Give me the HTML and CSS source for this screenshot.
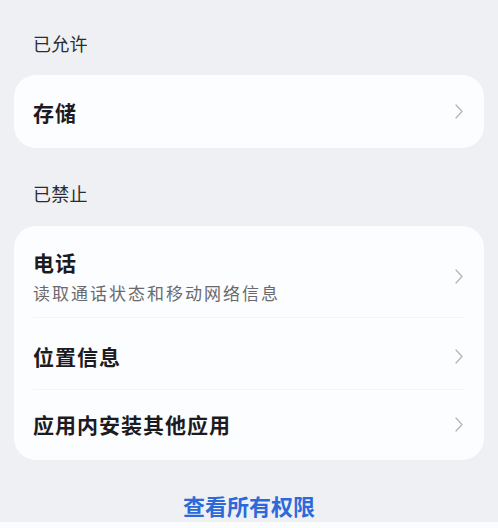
FILE: index.html
```html
<!DOCTYPE html>
<html lang="zh-CN">
<head>
<meta charset="utf-8">
<link rel="stylesheet" href="styles.css">
</head>
<body>
<div class="page">
  <div class="section-title first">已允许</div>
  <div class="card">
    <div class="row row-single">
      <div class="row-text"><div class="row-title">存储</div></div>
      <svg class="chev" viewBox="0 0 8 15" width="8" height="15"><path d="M1 1 L7 7.5 L1 14" fill="none" stroke="#b4b6b9" stroke-width="1.3" stroke-linecap="round" stroke-linejoin="round"/></svg>
    </div>
  </div>
  <div class="section-title second">已禁止</div>
  <div class="card">
    <div class="row row-phone divider">
      <div class="row-text">
        <div class="row-title">电话</div>
        <div class="row-sub">读取通话状态和移动网络信息</div>
      </div>
      <svg class="chev" viewBox="0 0 8 15" width="8" height="15"><path d="M1 1 L7 7.5 L1 14" fill="none" stroke="#b4b6b9" stroke-width="1.3" stroke-linecap="round" stroke-linejoin="round"/></svg>
    </div>
    <div class="row row-loc divider">
      <div class="row-text"><div class="row-title">位置信息</div></div>
      <svg class="chev" viewBox="0 0 8 15" width="8" height="15"><path d="M1 1 L7 7.5 L1 14" fill="none" stroke="#b4b6b9" stroke-width="1.3" stroke-linecap="round" stroke-linejoin="round"/></svg>
    </div>
    <div class="row row-install">
      <div class="row-text"><div class="row-title">应用内安装其他应用</div></div>
      <svg class="chev" viewBox="0 0 8 15" width="8" height="15"><path d="M1 1 L7 7.5 L1 14" fill="none" stroke="#b4b6b9" stroke-width="1.3" stroke-linecap="round" stroke-linejoin="round"/></svg>
    </div>
  </div>
  <div class="link">查看所有权限</div>
</div>
<div class="bottom-bar"></div>
</body>
</html>
```

FILE: styles.css
```css
html, body {
  margin: 0;
  padding: 0;
}
body {
  background: #eef0f3;
  font-family: "Noto Sans CJK SC", "Noto Sans", sans-serif;
  width: 498px;
  height: 528px;
  overflow: hidden;
  display: flex;
  flex-direction: column;
}
.page {
  padding: 0 14px;
  flex: 1;
}
.section-title {
  font-size: 18px;
  line-height: 24px;
  color: #2c2c30;
  padding-left: 19px;
  letter-spacing: 0.3px;
}
.section-title.first {
  margin-top: 31px;
  margin-bottom: 20px;
}
.section-title.second {
  margin-top: 33px;
  margin-bottom: 21px;
}
.card {
  background: #fcfdfe;
  border-radius: 22px;
}
.row {
  display: flex;
  align-items: center;
  padding: 0 21px 0 19px;
  position: relative;
}
.row-text {
  flex: 1;
}
.row-title {
  font-size: 21px;
  line-height: 28px;
  font-weight: 700;
  color: #1c1b1f;
  letter-spacing: 1px;
}
.row-sub {
  font-size: 17px;
  line-height: 22px;
  color: #6a6a6e;
  margin-top: 6px;
  letter-spacing: 2px;
}
.row-single {
  height: 73px;
}
.row-phone {
  height: 92px;
  padding-top: 8px;
  box-sizing: border-box;
}
.row-loc {
  height: 72px;
  padding-top: 4px;
  box-sizing: border-box;
}
.row-install {
  height: 70px;
  padding-bottom: 2px;
  box-sizing: border-box;
}
.divider::after {
  content: "";
  position: absolute;
  left: 19px;
  right: 19px;
  bottom: 0;
  height: 1px;
  background: #f3f4f6;
}
.chev {
  flex: none;
  display: block;
}
.link {
  margin-top: 30px;
  text-align: center;
  font-size: 22px;
  line-height: 30px;
  font-weight: 700;
  color: #2d6ad9;
}
.bottom-bar {
  height: 6px;
  background: #fbfcfd;
}
```
